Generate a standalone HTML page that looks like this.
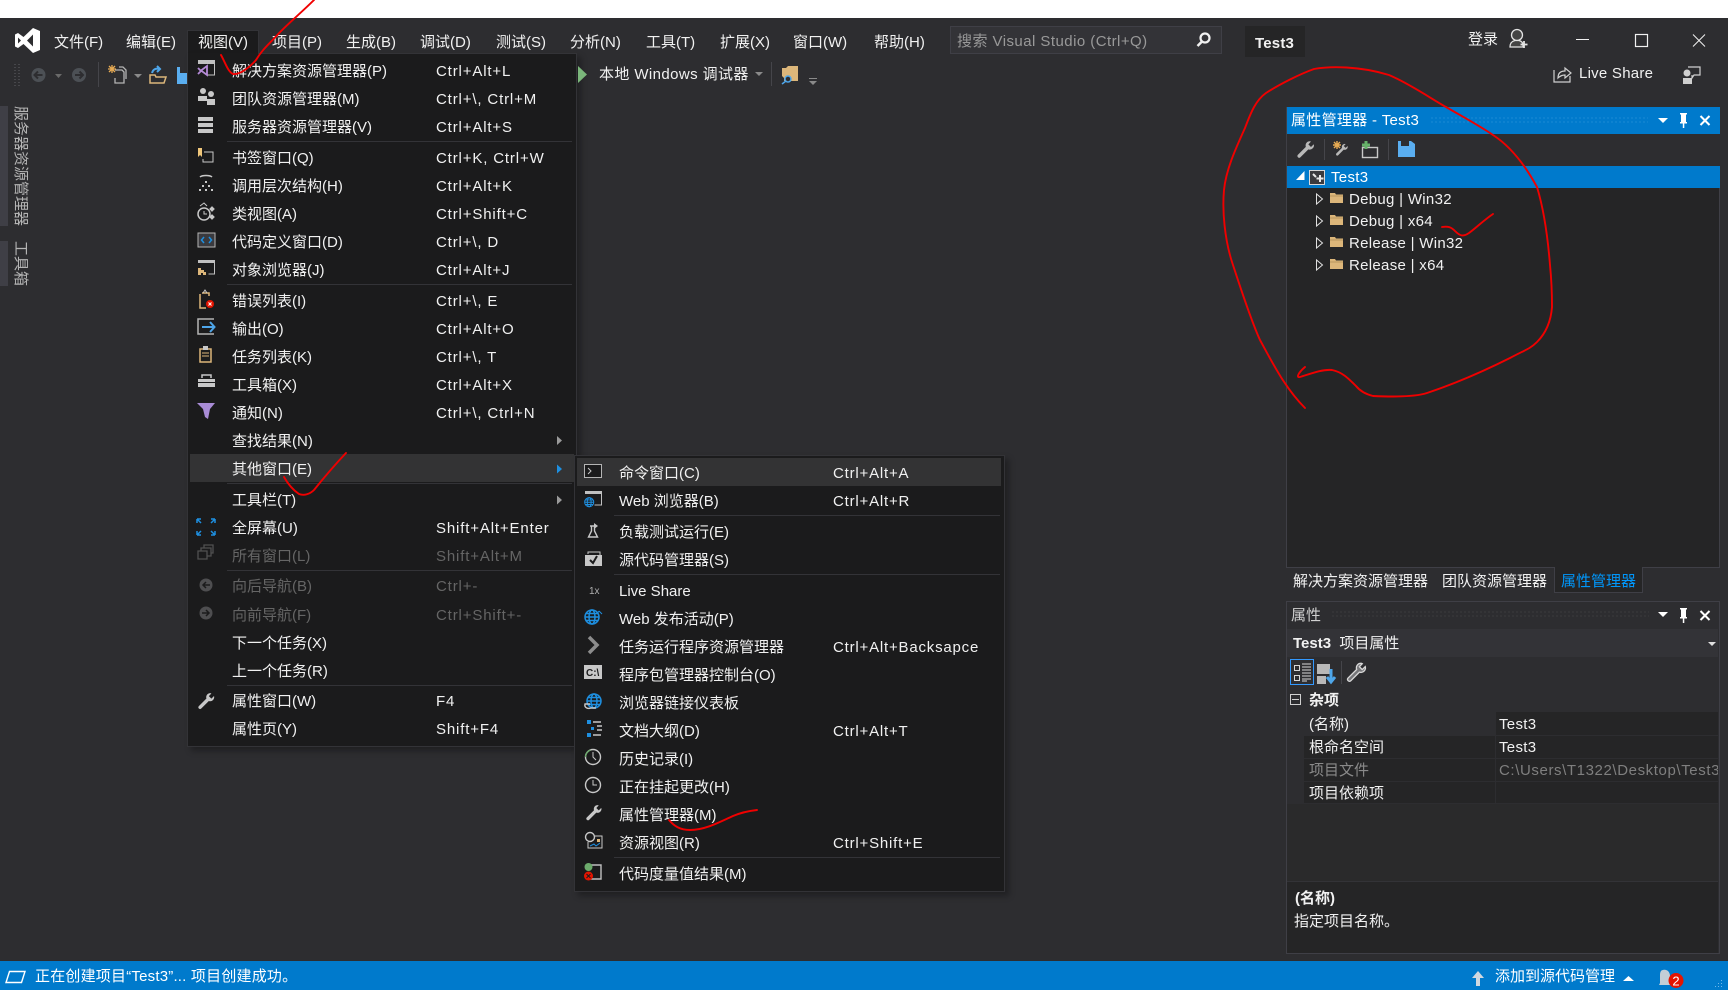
<!DOCTYPE html>
<html lang="zh-CN"><head><meta charset="utf-8"><title>Test3 - Visual Studio</title>
<style>
html,body{margin:0;padding:0;width:1728px;height:990px;overflow:hidden;background:#fff}
body{position:relative;font-family:"Liberation Sans","Noto Sans CJK SC",sans-serif;font-size:15px;color:#f1f1f1}
.a{position:absolute;white-space:nowrap}
.t{position:absolute;white-space:nowrap;height:22px;line-height:22px;margin-top:1px}
.b{position:absolute}
.mi{position:absolute;height:28px;line-height:28px;white-space:nowrap}
.mi i{font-style:normal;position:absolute;top:1px}
.m1 i:first-child{left:232px}.m1 i+i{left:436px;letter-spacing:.85px}
.m2 i:first-child{left:619px}.m2 i+i{left:833px;letter-spacing:.8px}
.d{color:#656565}
.sep{position:absolute;height:1px;background:#333337}
.grip{position:absolute;height:8px}
.tr{letter-spacing:.3px}
</style></head><body>
<div class="b" style="left:0;top:18px;width:1728px;height:943px;background:#2d2d30"></div>

<!-- left tool strips -->
<div class="b" style="left:0;top:106px;width:8px;height:120px;background:#3f3f46"></div>
<div class="b" style="left:0;top:241px;width:8px;height:45px;background:#3f3f46"></div>
<div class="a" style="left:9px;top:106px;writing-mode:vertical-rl;text-orientation:sideways;line-height:22px;color:#b4b4b4">服务器资源管理器</div>
<div class="a" style="left:9px;top:241px;writing-mode:vertical-rl;text-orientation:sideways;line-height:22px;color:#b4b4b4">工具箱</div>

<!-- menu bar -->
<div class="t" style="left:54px;top:31px">文件(F)</div>
<div class="t" style="left:126px;top:31px">编辑(E)</div>
<div class="b" style="left:187px;top:30px;width:72px;height:24px;background:#1b1b1c;border:1px solid #333337;border-bottom:0;box-sizing:border-box"></div>
<div class="t" style="left:198px;top:31px">视图(V)</div>
<div class="t" style="left:272px;top:31px">项目(P)</div>
<div class="t" style="left:346px;top:31px">生成(B)</div>
<div class="t" style="left:420px;top:31px">调试(D)</div>
<div class="t" style="left:496px;top:31px">测试(S)</div>
<div class="t" style="left:570px;top:31px">分析(N)</div>
<div class="t" style="left:646px;top:31px">工具(T)</div>
<div class="t" style="left:720px;top:31px">扩展(X)</div>
<div class="t" style="left:793px;top:31px">窗口(W)</div>
<div class="t" style="left:874px;top:31px">帮助(H)</div>
<div class="b" style="left:950px;top:26px;width:272px;height:28px;background:#333337;border:1px solid #3f3f46;box-sizing:border-box"></div>
<div class="t" style="left:957px;top:30px;color:#999;letter-spacing:.45px">搜索 Visual Studio (Ctrl+Q)</div>
<div class="b" style="left:1245px;top:26px;width:60px;height:31px;background:#252526"></div>
<div class="t" style="left:1255px;top:32px;font-weight:bold;letter-spacing:.2px">Test3</div>
<div class="t" style="left:1468px;top:28px">登录</div>

<!-- toolbar text -->
<div class="t" style="left:599px;top:63px;letter-spacing:.4px">本地 Windows 调试器</div>
<div class="t" style="left:1579px;top:62px;letter-spacing:.25px">Live Share</div>

<!-- property manager panel -->
<div class="b" style="left:1286px;top:107px;width:434px;height:461px;background:#252526;border:1px solid #3f3f46;box-sizing:border-box"></div>
<div class="b" style="left:1287px;top:107px;width:433px;height:27px;background:#007acc"></div>
<div class="grip" style="left:1430px;top:116px;width:218px;background:radial-gradient(#1f8cd4 .6px,transparent .9px) 0 0/4px 4px"></div>
<div class="t" style="left:1291px;top:109px;color:#fff;letter-spacing:.3px">属性管理器 - Test3</div>
<div class="b" style="left:1287px;top:134px;width:433px;height:32px;background:#2d2d30"></div>
<div class="b" style="left:1287px;top:166px;width:433px;height:22px;background:#007acc"></div>
<div class="t tr" style="left:1331px;top:166px;color:#fff">Test3</div>
<div class="t tr" style="left:1349px;top:188px">Debug | Win32</div>
<div class="t tr" style="left:1349px;top:210px">Debug | x64</div>
<div class="t tr" style="left:1349px;top:232px">Release | Win32</div>
<div class="t tr" style="left:1349px;top:254px">Release | x64</div>

<!-- tabs -->
<div class="t" style="left:1293px;top:570px">解决方案资源管理器</div>
<div class="t" style="left:1442px;top:570px">团队资源管理器</div>
<div class="b" style="left:1554px;top:567px;width:89px;height:26px;background:#252526;border:1px solid #3f3f46;border-top:0;box-sizing:border-box"></div>
<div class="t" style="left:1561px;top:570px;color:#0097fb">属性管理器</div>

<!-- properties panel -->
<div class="b" style="left:1286px;top:601px;width:434px;height:353px;background:#2d2d30;border:1px solid #3f3f46;box-sizing:border-box"></div>
<div class="t" style="left:1291px;top:604px;color:#d0d0d0">属性</div>
<div class="grip" style="left:1331px;top:610px;width:318px;background:radial-gradient(#3c3c40 .6px,transparent .9px) 0 0/4px 4px"></div>
<div class="b" style="left:1287px;top:629px;width:431px;height:28px;background:#333337"></div>
<div class="t" style="left:1293px;top:632px"><b>Test3</b>&nbsp;&nbsp;项目属性</div>
<div class="b" style="left:1290px;top:659px;width:24px;height:26px;border:1px solid #3399ff;box-sizing:border-box"></div>
<div class="b" style="left:1287px;top:686px;width:431px;height:26px;background:#2d2d30"></div>
<div class="b" style="left:1290px;top:694px;width:11px;height:11px;border:1px solid #d0d0d0;box-sizing:border-box"></div>
<div class="b" style="left:1292px;top:699px;width:7px;height:1px;background:#d0d0d0"></div>
<div class="t" style="left:1309px;top:689px;font-weight:bold">杂项</div>
<!-- grid -->
<div class="b" style="left:1304px;top:712px;width:192px;height:23px;background:#2d2d30"></div>
<div class="b" style="left:1496px;top:712px;width:222px;height:23px;background:#252526"></div>
<div class="b" style="left:1304px;top:735px;width:414px;height:68px;background:#252526"></div>
<div class="b" style="left:1304px;top:735px;width:414px;height:1px;background:#2d2d30"></div>
<div class="b" style="left:1304px;top:758px;width:414px;height:1px;background:#2d2d30"></div>
<div class="b" style="left:1304px;top:781px;width:414px;height:1px;background:#2d2d30"></div>
<div class="b" style="left:1304px;top:803px;width:414px;height:1px;background:#2d2d30"></div>
<div class="b" style="left:1495px;top:735px;width:1px;height:68px;background:#2d2d30"></div>
<div class="t" style="left:1309px;top:713px">(名称)</div>
<div class="t tr" style="left:1499px;top:713px">Test3</div>
<div class="t" style="left:1309px;top:736px">根命名空间</div>
<div class="t tr" style="left:1499px;top:736px">Test3</div>
<div class="t d" style="left:1309px;top:759px;color:#8a8a8a">项目文件</div>
<div class="a" style="left:1499px;top:760px;height:22px;line-height:22px;width:219px;overflow:hidden;color:#7f7f7f;letter-spacing:.6px">C:\Users\T1322\Desktop\Test3</div>
<div class="t" style="left:1309px;top:782px">项目依赖项</div>
<div class="b" style="left:1287px;top:804px;width:431px;height:77px;background:#2a2a2b"></div>
<div class="b" style="left:1287px;top:881px;width:431px;height:72px;background:#252526;border-top:1px solid #333337;box-sizing:border-box"></div>
<div class="t" style="left:1295px;top:887px;font-weight:bold">(名称)</div>
<div class="t" style="left:1294px;top:910px">指定项目名称。</div>

<!-- status bar -->
<div class="b" style="left:0;top:961px;width:1728px;height:29px;background:#007acc"></div>
<div class="t" style="left:35px;top:965px;color:#fff;letter-spacing:.2px">正在创建项目“Test3”... 项目创建成功。</div>
<div class="t" style="left:1495px;top:965px;color:#fff">添加到源代码管理</div>

<!-- main menu -->
<div class="b" style="left:187px;top:53px;width:390px;height:694px;background:#1b1b1c;border:1px solid #333337;box-sizing:border-box;box-shadow:4px 4px 6px rgba(0,0,0,.3)"></div>
<div class="b" style="left:188px;top:53px;width:70px;height:1px;background:#1b1b1c"></div>
<div class="b" style="left:190px;top:454px;width:384px;height:28px;background:#333334"></div>
<div class="mi m1" style="top:57px"><i>解决方案资源管理器(P)</i><i>Ctrl+Alt+L</i></div>
<div class="mi m1" style="top:85px"><i>团队资源管理器(M)</i><i>Ctrl+\, Ctrl+M</i></div>
<div class="mi m1" style="top:113px"><i>服务器资源管理器(V)</i><i>Ctrl+Alt+S</i></div>
<div class="sep" style="left:227px;top:141px;width:345px"></div>
<div class="mi m1" style="top:144px"><i>书签窗口(Q)</i><i>Ctrl+K, Ctrl+W</i></div>
<div class="mi m1" style="top:172px"><i>调用层次结构(H)</i><i>Ctrl+Alt+K</i></div>
<div class="mi m1" style="top:200px"><i>类视图(A)</i><i>Ctrl+Shift+C</i></div>
<div class="mi m1" style="top:228px"><i>代码定义窗口(D)</i><i>Ctrl+\, D</i></div>
<div class="mi m1" style="top:256px"><i>对象浏览器(J)</i><i>Ctrl+Alt+J</i></div>
<div class="sep" style="left:227px;top:284px;width:345px"></div>
<div class="mi m1" style="top:287px"><i>错误列表(I)</i><i>Ctrl+\, E</i></div>
<div class="mi m1" style="top:315px"><i>输出(O)</i><i>Ctrl+Alt+O</i></div>
<div class="mi m1" style="top:343px"><i>任务列表(K)</i><i>Ctrl+\, T</i></div>
<div class="mi m1" style="top:371px"><i>工具箱(X)</i><i>Ctrl+Alt+X</i></div>
<div class="mi m1" style="top:399px"><i>通知(N)</i><i>Ctrl+\, Ctrl+N</i></div>
<div class="mi m1" style="top:427px"><i>查找结果(N)</i></div>
<div class="mi m1" style="top:455px"><i>其他窗口(E)</i></div>
<div class="sep" style="left:227px;top:483px;width:345px"></div>
<div class="mi m1" style="top:486px"><i>工具栏(T)</i></div>
<div class="mi m1" style="top:514px"><i>全屏幕(U)</i><i>Shift+Alt+Enter</i></div>
<div class="mi m1 d" style="top:542px"><i>所有窗口(L)</i><i>Shift+Alt+M</i></div>
<div class="sep" style="left:227px;top:570px;width:345px"></div>
<div class="mi m1 d" style="top:572px"><i>向后导航(B)</i><i>Ctrl+-</i></div>
<div class="mi m1 d" style="top:601px"><i>向前导航(F)</i><i>Ctrl+Shift+-</i></div>
<div class="mi m1" style="top:629px"><i>下一个任务(X)</i></div>
<div class="mi m1" style="top:657px"><i>上一个任务(R)</i></div>
<div class="sep" style="left:227px;top:685px;width:345px"></div>
<div class="mi m1" style="top:687px"><i>属性窗口(W)</i><i>F4</i></div>
<div class="mi m1" style="top:715px"><i>属性页(Y)</i><i>Shift+F4</i></div>

<!-- sub menu -->
<div class="b" style="left:574px;top:455px;width:431px;height:437px;background:#1b1b1c;border:1px solid #333337;box-sizing:border-box;box-shadow:4px 4px 6px rgba(0,0,0,.3)"></div>
<div class="b" style="left:577px;top:458px;width:424px;height:28px;background:#333334"></div>
<div class="mi m2" style="top:459px"><i>命令窗口(C)</i><i>Ctrl+Alt+A</i></div>
<div class="mi m2" style="top:487px"><i>Web 浏览器(B)</i><i>Ctrl+Alt+R</i></div>
<div class="sep" style="left:614px;top:515px;width:386px"></div>
<div class="mi m2" style="top:518px"><i>负载测试运行(E)</i></div>
<div class="mi m2" style="top:546px"><i>源代码管理器(S)</i></div>
<div class="sep" style="left:614px;top:574px;width:386px"></div>
<div class="mi m2" style="top:577px"><i>Live Share</i></div>
<div class="mi m2" style="top:605px"><i>Web 发布活动(P)</i></div>
<div class="mi m2" style="top:633px"><i>任务运行程序资源管理器</i><i>Ctrl+Alt+Backsapce</i></div>
<div class="mi m2" style="top:661px"><i>程序包管理器控制台(O)</i></div>
<div class="mi m2" style="top:689px"><i>浏览器链接仪表板</i></div>
<div class="mi m2" style="top:717px"><i>文档大纲(D)</i><i>Ctrl+Alt+T</i></div>
<div class="mi m2" style="top:745px"><i>历史记录(I)</i></div>
<div class="mi m2" style="top:773px"><i>正在挂起更改(H)</i></div>
<div class="mi m2" style="top:801px"><i>属性管理器(M)</i></div>
<div class="mi m2" style="top:829px"><i>资源视图(R)</i><i>Ctrl+Shift+E</i></div>
<div class="sep" style="left:614px;top:857px;width:386px"></div>
<div class="mi m2" style="top:860px"><i>代码度量值结果(M)</i></div>

<!-- icons + annotations overlay -->
<svg class="b" style="left:0;top:0" width="1728" height="990" viewBox="0 0 1728 990" fill="none">
<defs>
<path id="wr" d="M11.5 1a3.5 3.5 0 0 0-3.3 4.7L1.5 12.4a1.5 1.5 0 0 0 2.1 2.1l6.7-6.7A3.5 3.5 0 0 0 14.8 3.5L12.5 5.8 10.3 3.6 12.5 1.3A3.5 3.5 0 0 0 11.5 1z"/>
<g id="globe" stroke-width="1.5"><circle cx="8" cy="8" r="7"/><ellipse cx="8" cy="8" rx="3" ry="7"/><path d="M1 8h14M2 4.5h12M2 11.5h12"/></g>
<g id="folder"><path d="M0 1h5l1 1.500h7V11H0z" fill="#dcb67a"/><path d="M0 4h13" stroke="#b9955f"/></g>
</defs>
<!-- VS logo -->
<path fill="#fff" fill-rule="evenodd" d="M33 28 40 31V50L33 53 23.5 44 18 48 15 46.5V34.5L18 33 23.5 37ZM33 34.5 27 40.5 33 46.5ZM18 37.5V43.5L21 40.5Z"/>
<!-- toolbar -->
<path stroke="#47474b" stroke-width="2" stroke-dasharray="1 2" d="M15 64V87M19 64V87"/>
<circle cx="38.500" cy="75" r="7" fill="#4c5055"/><path stroke="#2d2d30" stroke-width="2" d="M42.500 75h-7M38 71.500l-3.500 3.500 3.500 3.500"/>
<path fill="#6a6a6a" d="M55 74h7l-3.500 4z"/>
<circle cx="79" cy="75" r="7" fill="#4c5055"/><path stroke="#2d2d30" stroke-width="2" d="M75 75h7M79.500 71.500l3.500 3.500-3.500 3.500"/>
<path stroke="#45454a" d="M98.500 62V87"/>
<path stroke="#b4b4b4" stroke-width="1.300" d="M115 70h7l2 2v11h-9v-5M119 67h4l3 3v9"/>
<path stroke="#e8ab53" stroke-width="1.300" d="M108 69h8M112 65v8M109 66l6 6M115 66l-6 6"/>
<path fill="#8a8a8a" d="M134 74h8l-4 4z"/>
<path stroke="#dcb67a" stroke-width="1.500" fill="#2d2d30" d="M150 83V75h5l1 2h10l-2 6z"/>
<path stroke="#4ea6ea" stroke-width="2" d="M152 73c1-4 4-5 8-4M157 66l3 3-3 3"/>
<path fill="#5aaef0" d="M177 67h3v6h7v11h-10z"/>
<path fill="#7bb77b" d="M578 66 587 74.500 578 83z"/>
<path fill="#8a8a8a" d="M755 72h8l-4 4z"/>
<path stroke="#45454a" d="M771.500 62V86"/>
<path fill="#dcb67a" d="M782 68h4l2-2h10v15h-14v-3l-2-2z"/>
<circle cx="788" cy="79" r="3" stroke="#4ea6ea" stroke-width="1.500" fill="#2d2d30"/><path stroke="#4ea6ea" stroke-width="1.500" d="M786 81l-4 3"/>
<path fill="#8a8a8a" d="M809 78h8v1h-8zM809 81h8l-4 4z"/>
<!-- top right -->
<circle cx="1205" cy="38" r="4.500" stroke="#f1f1f1" stroke-width="2.200"/><path stroke="#f1f1f1" stroke-width="2.500" d="M1201.500 42l-4 4"/>
<circle cx="1517" cy="35" r="5.500" stroke="#e4e4e4" fill="#444" stroke-width="1.300"/><path stroke="#e4e4e4" fill="#444" stroke-width="1.300" d="M1510 47c0-5 3-6 5-6.500h4c2 .5 4 2 4 5v1.500z"/><path stroke="#e4e4e4" stroke-width="1.800" d="M1524 41v7M1520.500 44.500h7"/>
<path stroke="#f1f1f1" d="M1576 39.500h13"/>
<rect x="1635.500" y="34.500" width="12" height="12" stroke="#f1f1f1" stroke-width="1.200"/>
<path stroke="#f1f1f1" d="M1693 34.500 1705 46.500M1705 34.500 1693 46.500"/>
<path stroke="#d0d0d0" stroke-width="1.200" d="M1554 70v12h16v-6M1558 78c0-5 3-7 7-7v-3l6 5-6 5v-3c-3 0-5 1-7 3z"/>
<path fill="#cfcfcf" d="M1683 78h9v6h-9z"/><circle cx="1687" cy="73" r="3.500" fill="#cfcfcf"/><path stroke="#cfcfcf" stroke-width="1.200" d="M1688 67h12v8h-6l-2 3v-3"/>
<!-- panel 1 -->
<path fill="#fff" d="M1658 118h10l-5 5z"/><path fill="#fff" d="M1680 113h7v1.500h-1V122h1v1.500h-2.700V128h-1.500v-4.500H1680V122h1v-7.500h-1z"/>
<path stroke="#fff" stroke-width="2" d="M1700.500 116 1709.500 125M1709.500 116 1700.500 125"/>
<use href="#wr" transform="translate(1296 140) scale(1.200)" fill="#b9b9b9"/>
<path stroke="#45454a" d="M1324.500 139V160M1388.500 139V160"/>
<use href="#wr" transform="translate(1335 143) scale(.85)" fill="#b9b9b9"/>
<path stroke="#e8ab53" stroke-width="1.400" d="M1333 145h8M1337 141v8M1334 142l6 6M1340 142l-6 6"/>
<rect x="1362.500" y="147.500" width="15" height="10" stroke="#c8c8c8" stroke-width="1.400"/><path stroke="#67b36a" stroke-width="3" d="M1366 141v8M1362 145h8"/>
<path fill="#5aaef0" d="M1398 141h3v5h8v-5h2l4 3v13h-17z"/><rect x="1402" y="141" width="6" height="4" fill="#2d2d30"/>
<path fill="#fff" d="M1304.500 171v9h-8.500z"/>
<rect x="1309.500" y="170.500" width="15" height="14" stroke="#d8d8d8" fill="#3a3a3e"/><path stroke="#e8e8e8" stroke-width="2" d="M1313 174l3 3M1320 175v7M1316.500 178.500h7"/>
<g stroke="#e0e0e0" fill="#252526"><path d="M1316.500 194v10l6-5zM1316.500 216v10l6-5zM1316.500 238v10l6-5zM1316.500 260v10l6-5z"/></g>
<use href="#folder" x="1330" y="192"/><use href="#folder" x="1330" y="214"/><use href="#folder" x="1330" y="236"/><use href="#folder" x="1330" y="258"/>
<!-- panel 2 -->
<path fill="#fff" d="M1658 612h10l-5 5z"/><path fill="#fff" d="M1680 608h7v1.500h-1V617h1v1.500h-2.700V623h-1.500v-4.500H1680V617h1v-7.500h-1z"/>
<path stroke="#fff" stroke-width="2" d="M1700.500 611 1709.500 620M1709.500 611 1700.500 620"/>
<path fill="#e0e0e0" d="M1708 642h8l-4 4z"/>
<g stroke="#d8d8d8"><rect x="1294.500" y="665.500" width="5" height="5"/><rect x="1294.500" y="675.500" width="5" height="5"/><path d="M1302 664h9M1302 667h9M1302 670h9M1302 673h9M1302 676h9M1302 679h9M1302 681h5"/></g>
<rect x="1317" y="664" width="13" height="10" fill="#b8b8b8"/><rect x="1317" y="676" width="9" height="8" fill="#b8b8b8"/><path stroke="#4ea6ea" stroke-width="3" d="M1331 669v12M1327 677l4 5 4-5"/>
<path stroke="#45454a" d="M1341.500 661V684"/>
<use href="#wr" transform="translate(1346 662) scale(1.300)" stroke="#d8d8d8" fill="#77777a"/>
<!-- status -->
<path stroke="#fff" stroke-width="1.400" d="M9.500 971.500H25L21.500 982.500H6z"/>
<path fill="#d0d8e0" d="M1478 971l6 7h-4v8h-4v-8h-4z"/>
<path fill="#fff" d="M1623 981h11l-5.500-5z"/>
<path fill="#c4ced6" d="M1663 970c4-1 7 2 7 6l1 7 2 2h-14l1-2v-8c0-3 1-5 3-5z"/>
<circle cx="1676" cy="980.500" r="7.500" fill="#e51400"/><text x="1676" y="985.500" text-anchor="middle" fill="#fff" font-size="13" font-family="Liberation Sans">2</text>
<path stroke="#6fb7e8" stroke-dasharray="1 2" d="M1715 986.500h8M1718 983.500h5M1721 980.500h2"/>

<!-- main menu icons -->
<path fill="#c0c0c0" d="M198 60h17v4h-17z"/><path stroke="#c0c0c0" d="M214.500 64v11h-7"/>
<path stroke="#b58ad6" stroke-width="1.800" d="M198 68l3 3-3 3M207 66v9l-6-4.500z"/>
<circle cx="203" cy="91" r="3" fill="#c8c8c8"/><circle cx="211" cy="94" r="3" fill="#c8c8c8"/><path fill="#c8c8c8" d="M198 96h9v5h-9zM207 99h8v6h-8z"/>
<path fill="#c8c8c8" d="M198 117h15v4h-15zM198 123h15v4h-15zM198 129h15v4h-15z"/>
<path fill="#f0c77b" d="M198 148h4v9l-2-2-2 2z"/><path stroke="#c8c8c8" d="M204 152h9v10h-10v-3"/>
<path stroke="#c8c8c8" stroke-width="1.500" d="M200 177c2-2 10-2 12 0"/><g fill="#c8c8c8"><rect x="205" y="181" width="2" height="2"/><rect x="202" y="185" width="2" height="2"/><rect x="208" y="185" width="2" height="2"/><rect x="199" y="189" width="2" height="2"/><rect x="205" y="189" width="2" height="2"/><rect x="211" y="189" width="2" height="2"/></g>
<circle cx="204" cy="214" r="6" stroke="#c8c8c8" stroke-width="1.500"/><path stroke="#c8c8c8" d="M204 211v3h3M200 206l4-3 3 3"/><rect x="210" y="207" width="4" height="4" fill="#c8c8c8" transform="rotate(45 212 209)"/><rect x="210" y="215" width="4" height="4" fill="#c8c8c8" transform="rotate(45 212 217)"/>
<rect x="198" y="233" width="17" height="14" fill="#3a3a3e" stroke="#b4b4b4"/><path stroke="#1e8fe0" stroke-width="1.500" d="M204 237l-2.500 3 2.500 3M209 237l2.500 3-2.500 3"/>
<path fill="#c0c0c0" d="M198 260h17v3h-17z"/><path stroke="#c0c0c0" d="M214.500 263v11h-6"/>
<path fill="#dcb67a" d="M198 268h3v2h3v2h2v3h-3v-2h-2v2h-3z"/>
<path stroke="#dcb67a" stroke-width="1.500" d="M200 294v14h6M202 293h7v3"/><path stroke="#c8c8c8" d="M203 293l2-3 2 3"/><circle cx="210" cy="304" r="4" fill="#e51400"/><path stroke="#fff" d="M208.500 302.500l3 3M211.500 302.500l-3 3"/>
<path stroke="#b4b4b4" stroke-width="1.500" d="M214 319h-16v15h16"/><path stroke="#4ea6ea" stroke-width="2" d="M202 327h12M210 322l4.500 5-4.500 5"/>
<rect x="200" y="349" width="11" height="13" stroke="#dcb67a" stroke-width="1.500"/><path fill="#c8c8c8" d="M203 346h5v4h-5z"/><path stroke="#dcb67a" d="M202 353h7M202 356h7"/>
<path fill="#c8c8c8" d="M198 379h17v8h-17z"/><path stroke="#c8c8c8" d="M202 378v-3h9v3" stroke-width="1.500"/><path stroke="#1b1b1c" d="M198 382.500h17"/>
<path fill="#a98cd6" d="M197 403h18l-5 6-2 10-3-2-2-8z"/>
<path stroke="#1e8fe0" stroke-width="1.500" d="M197 519l4 4M197 519h4M197 519v4M215 519l-4 4M215 519h-4M215 519v4M197 535l4-4M197 535h4M197 535v-4M215 535l-4-4M215 535h-4M215 535v-4"/>
<path stroke="#505050" stroke-width="1.300" d="M198 551h9v8h-9zM201 551v-3h10v8h-4M204 548v-3h9v8h-2"/>
<circle cx="206" cy="585" r="6.500" fill="#4e4e50"/><path stroke="#1b1b1c" stroke-width="1.500" d="M210 585h-7M206 582l-3 3 3 3"/>
<circle cx="206" cy="613" r="6.500" fill="#4e4e50"/><path stroke="#1b1b1c" stroke-width="1.500" d="M202 613h7M206 610l3 3-3 3"/>
<use href="#wr" transform="translate(197 692) scale(1.150)" fill="#c8c8c8"/>
<path fill="#9a9a9a" d="M557 436l5 4.500-5 4.500zM557 495.500l5 4.500-5 4.500z"/><path fill="#1e8fe0" d="M557 464.500l5 4.500-5 4.500z"/>
<!-- sub menu icons -->
<rect x="584.500" y="464.500" width="17" height="13" fill="#1b1b1c" stroke="#b4b4b4"/><path stroke="#c8c8c8" d="M588 468l3 3-3 3"/>
<path fill="#c0c0c0" d="M585 491h17v3h-17z"/><path stroke="#c0c0c0" d="M601.500 494v11h-7"/><use href="#globe" transform="translate(584 497) scale(.65)" stroke="#1e8fe0"/>
<path stroke="#c8c8c8" stroke-width="1.400" d="M590 526h5M591.500 526v5l-3 6h9l-3-6v-5"/><path fill="#c8c8c8" d="M594 523l4 3-4 3z"/>
<path fill="#c8c8c8" d="M585 555h17v11h-17z"/><path stroke="#c8c8c8" d="M588 554v-2h12v3"/><path stroke="#1b1b1c" stroke-width="2" d="M590 560l3 3 4-7"/>
<text x="589" y="594" fill="#b0b0b0" font-size="10" font-family="Liberation Sans">1x</text>
<use href="#globe" transform="translate(584 609)" stroke="#1e8fe0"/><path stroke="#1e8fe0" d="M599 611l3 3M599 611l-2 3"/>
<path stroke="#8c8c8c" stroke-width="3.500" d="M589 637l8 8-8 8"/>
<rect x="584" y="665" width="18" height="14" fill="#c8c8c8"/><text x="586" y="676" fill="#1b1b1c" font-size="10" font-weight="bold" font-family="Liberation Sans">C:\</text>
<use href="#globe" transform="translate(586 693)" stroke="#1e8fe0"/><path stroke="#c8c8c8" stroke-width="1.400" d="M590 704h-5c-1 4 3 5 6 4h5"/>
<path fill="#1e8fe0" d="M587 720h4v4h-4zM587 733h4v4h-4z"/><path stroke="#c8c8c8" stroke-width="1.500" d="M593 722h8M597 726h5M597 730h5M593 735h8"/><path fill="#1e8fe0" d="M591 727h3v3h-3z"/>
<circle cx="593" cy="757" r="7.500" stroke="#c8c8c8" stroke-width="1.400"/><path stroke="#6cab6c" stroke-width="1.400" d="M585.500 757a7.500 7.500 0 0 1 5-7"/><path stroke="#c8c8c8" d="M593 752v5l3 3"/>
<circle cx="593" cy="785" r="7.500" stroke="#c8c8c8" stroke-width="1.400"/><path stroke="#c8c8c8" d="M593 780v5h4"/>
<use href="#wr" transform="translate(585 804) scale(1.100)" fill="#c8c8c8"/>
<circle cx="590" cy="837" r="4.500" stroke="#c8c8c8" stroke-width="1.400"/><path stroke="#c8c8c8" d="M595 836h7v12h-14v-6"/><path fill="#dcb67a" d="M597 839h3v3h-3z"/><path stroke="#1e8fe0" d="M590 846l4-2 2 2 4-3"/>
<path stroke="#c0c0c0" stroke-width="1.400" d="M590 865h11v14h-11"/><circle cx="588.500" cy="867" r="4" fill="#6cab6c"/><circle cx="588.500" cy="876" r="4.500" fill="#e51400"/><path stroke="#1b1b1c" d="M586.500 874l4 4M590.500 874l-4 4"/>

<!-- red annotations -->
<g stroke="#f00000" stroke-width="1.900" stroke-linecap="round" stroke-linejoin="round">
<path d="M314 0C300 14 285 26 275.500 37C268 45 262 50 256 60C250 67 240 75 233 74C228 72 225 62 221 55"/>
<path d="M284 477C288 484 293 490 299 494C304 496 310 494 314 490C322 480 330 470 346 453"/>
<path d="M1442 227C1448 226 1451 227 1455 231C1460 236 1463 237 1469 233C1476 228 1484 220 1493 214"/>
<path d="M669 820C674 826 680 830 690 830C705 830 720 822 733 816C740 813 748 811 757 810"/>
<path d="M1305 408C1285 388 1272 362 1260 340C1250 318 1240 286 1232 262C1225 240 1222 212 1224 190C1226 170 1235 150 1245 128C1251 112 1256 100 1266 93C1280 84 1300 74 1314 69C1330 66 1360 66 1389 75C1410 84 1430 98 1446 107C1465 118 1480 126 1493 135C1510 146 1525 165 1537 187C1544 210 1548 240 1550 265C1552 285 1552 295 1552 307C1551 320 1547 332 1537 342C1530 349 1525 350 1510 358C1490 368 1460 382 1427 393C1415 397 1395 397 1373 396C1365 394 1360 391 1356 386C1348 378 1342 372 1332 370C1322 369 1310 374 1300 377C1296 378 1298 373 1305 367"/>
</g>
</svg>
</body></html>
